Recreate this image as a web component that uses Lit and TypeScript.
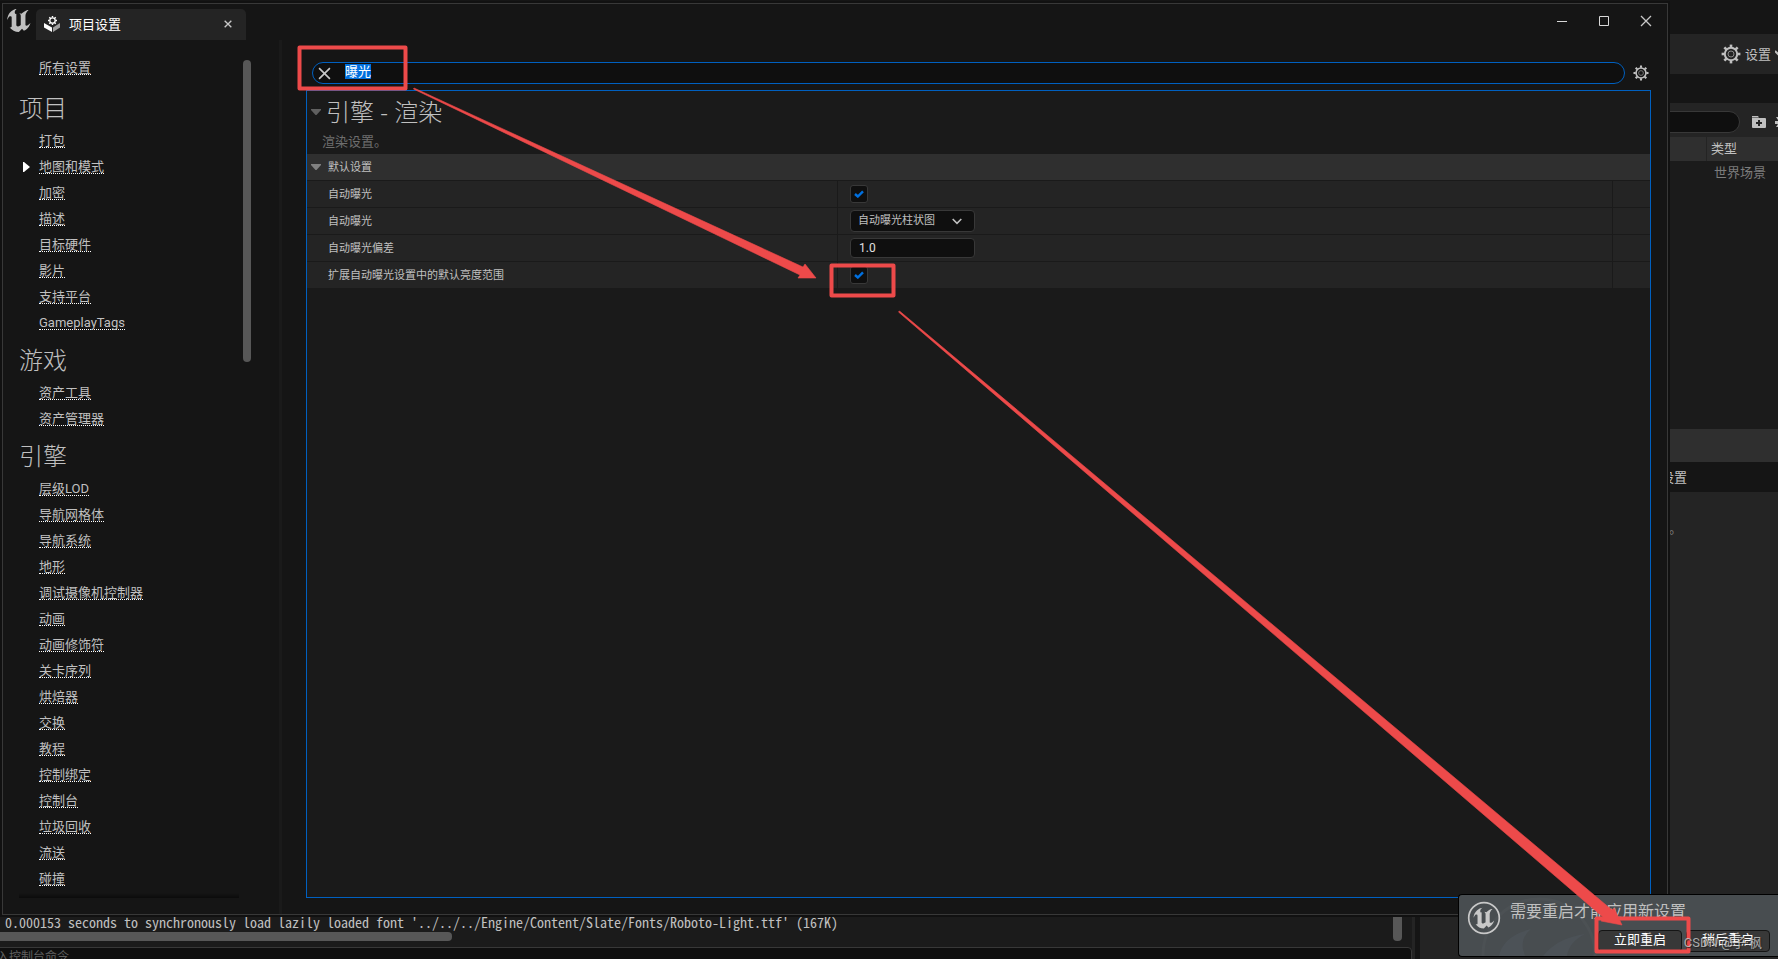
import { LitElement, html, svg, css } from "lit";
import { customElement, query } from "lit/decorators.js";

const UNREAL_U =
  "M19.13 13.729c-.206.997-1.126 3.557-4.06 4.942l-1.179-1.325-1.988 2a7.338 7.338 0 01-5.804-2.978 2.859 2.859 0 00.65.123c.326.006.678-.114.678-.66v-5.394a.89.89 0 00-1.116-.89c-.92.212-1.656 2.509-1.656 2.509a7.304 7.304 0 012.528-5.597 7.408 7.408 0 013.73-1.721c-1.006.573-1.57 1.507-1.57 2.29 0 1.262.76 1.109.984.923v7.28a1.157 1.157 0 00.148.256 1.075 1.075 0 00.88.445c.76 0 1.747-.868 1.747-.868V9.172c0-.6-.452-1.324-.905-1.572 0 0 .838.149 1.484.346a5.537 5.537 0 01.387-.425c1.508-1.48 2.929-1.902 4.112-2.112 0 0-2.151 1.69-2.151 3.96 0 1.687.043 5.801.043 5.801.799.771 1.986-.342 3.059-1.441z";

const base = css`
  * {
    box-sizing: border-box;
  }
  button,
  input,
  select {
    font: inherit;
    color: inherit;
    margin: 0;
    padding: 0;
    border: 0;
    background: none;
    outline: none;
    border-radius: 0;
  }
  button {
    display: flex;
    align-items: center;
    justify-content: center;
  }
  svg {
    display: block;
    flex: none;
  }
`;

const gear = (size: number) => html`
  <svg width=${size} height=${size} viewBox="0 0 20 20" fill="none" stroke="#c0c0c0">
    <circle cx="10" cy="10" r="6.2" stroke-width="2"></circle>
    <circle cx="10" cy="10" r="3" stroke-width="1" stroke="#8a8a8a"></circle>
    ${[0, 45, 90, 135, 180, 225, 270, 315].map(
      (a) => svg`<path d="M10 3.4V.6" stroke-width="2.6" transform="rotate(${a} 10 10)"></path>`
    )}
  </svg>
`;

const cross = (size: number, width: number) => html`
  <svg width=${size} height=${size} viewBox="0 0 12 12" fill="none" stroke="#c8c8c8" stroke-width=${width}>
    <path d="M1 1L11 11M11 1L1 11"></path>
  </svg>
`;

interface Section {
  title: string;
  items: string[];
}

const SECTIONS: Section[] = [
  {
    title: "项目",
    items: ["打包", "地图和模式", "加密", "描述", "目标硬件", "影片", "支持平台", "GameplayTags"],
  },
  { title: "游戏", items: ["资产工具", "资产管理器"] },
  {
    title: "引擎",
    items: [
      "层级LOD", "导航网格体", "导航系统", "地形", "调试摄像机控制器", "动画", "动画修饰符", "关卡序列",
      "烘焙器", "交换", "教程", "控制绑定", "控制台", "垃圾回收", "流送", "碰撞",
    ],
  },
];

@customElement("editor-backdrop")
class EditorBackdrop extends LitElement {
  static styles = [
    base,
    css`
      :host {
        display: flex;
        gap: 5px;
        height: 100%;
        background: #151515;
      }
      .left {
        flex: 1;
        min-width: 0;
        display: flex;
        flex-direction: column;
        justify-content: flex-end;
      }
      .log {
        background: #1b1b1b;
        border-right: 3px solid #242424;
        margin-bottom: -12px;
        display: flex;
        flex-direction: column;
      }
      .lines {
        display: flex;
        justify-content: space-between;
        height: 40px;
        padding: 0 10px 0 5px;
        color: #c0c0c0;
        font-family: "Noto Sans Mono CJK SC", "DejaVu Sans Mono", monospace;
        font-size: 14px;
        line-height: 18px;
        white-space: pre;
      }
      .text {
        padding-top: 12px;
      }
      .vbar {
        width: 9px;
        height: 40px;
        border-radius: 4px;
        background: #575757;
      }
      .hbar {
        width: 32%;
        height: 9px;
        margin: -9px 0 6px;
        border-radius: 0 4px 4px 0;
        background: #575757;
      }
      .console {
        height: 24px;
        margin-left: -20px;
        padding: 0 4px 4px;
        border: 1px solid #383838;
        border-radius: 4px;
        background: #0f0f0f;
        font-size: 12px;
      }
      .console::placeholder {
        color: #606060;
        opacity: 1;
      }
      .right {
        width: 358px;
        display: flex;
        flex-direction: column;
        background: #242424;
        font-size: 13px;
        color: #c0c0c0;
      }
      .strip {
        flex: none;
        background: #151515;
      }
      .top {
        height: 34px;
      }
      .gap {
        height: 29px;
      }
      .bar {
        flex: none;
        display: flex;
        justify-content: flex-end;
        align-items: center;
        gap: 4px;
        height: 40px;
      }
      .bar span {
        padding-bottom: 2px;
      }
      .find {
        height: 34px;
        gap: 9px;
        padding-top: 3px;
      }
      .find input {
        flex: 1;
        height: 22px;
        margin-right: 3px;
        border: 1px solid #383838;
        border-radius: 11px;
        background: #0f0f0f;
      }
      .cols {
        flex: none;
        display: flex;
        gap: 1px;
        height: 24px;
        line-height: 23px;
      }
      .cols span {
        background: #2f2f2f;
      }
      .name {
        flex: 1;
      }
      .kind {
        width: 71px;
        padding-left: 4px;
      }
      .outline {
        flex: none;
        height: 268px;
        padding: 2px 12px;
        background: #1b1b1b;
        color: #7c7c7c;
        text-align: right;
        line-height: 20px;
      }
      .band {
        flex: none;
        height: 33px;
        background: #2f2f2f;
      }
      .title {
        flex: none;
        height: 30px;
        line-height: 32px;
        padding-left: 241px;
        background: #151515;
      }
      .note {
        padding: 26px 0 0 249px;
        color: #7c7c7c;
      }
    `,
  ];

  render() {
    return html`
      <div class="left">
        <div class="log">
          <div class="lines">
            <span class="text">0.000153 seconds to synchronously load lazily loaded font '../../../Engine/Content/Slate/Fonts/Roboto-Light.ttf' (167K)</span>
            <span class="vbar"></span>
          </div>
          <div class="hbar"></div>
          <input class="console" aria-label="控制台命令" placeholder="输入控制台命令" />
        </div>
      </div>
      <div class="right">
        <div class="strip top"></div>
        <div class="bar">
          ${gear(20)}<span>设置</span>
          <svg width="3" height="8" viewBox="0 0 3 8" fill="none" stroke="#c0c0c0" stroke-width="2"><path d="M0 1L5 6"></path></svg>
        </div>
        <div class="strip gap"></div>
        <div class="bar find">
          <input aria-label="搜索" />
          <svg width="14" height="14" viewBox="0 0 14 14" fill="#c0c0c0">
            <path d="M0 1h6l1 1.500H0zM0 3h13q1 0 1 1v8q0 1-1 1H1q-1 0-1-1z"></path>
            <path d="M7 5v6M4 8h6" stroke="#242424" stroke-width="2"></path>
          </svg>
          <svg width="3" height="14" viewBox="0 0 3 14" fill="#c0c0c0"><path d="M0 6h3v3H0zM1 2h2v3zM1 12h2v-3z"></path></svg>
        </div>
        <div class="cols"><span class="name"></span><span class="kind">类型</span></div>
        <div class="outline">世界场景</div>
        <div class="band"></div>
        <div class="title">设置</div>
        <div class="note">。</div>
      </div>
    `;
  }
}

@customElement("settings-nav")
class SettingsNav extends LitElement {
  static styles = [
    base,
    css`
      :host {
        display: flex;
        width: 276px;
        padding: 16px 28px 16px 16px;
        font-size: 13px;
        color: #c0c0c0;
      }
      nav {
        flex: 1;
        display: flex;
        flex-direction: column;
        border-bottom: 1px solid #0c0c0c;
        background: linear-gradient(transparent, #0d0d0d) bottom / 100% 4px no-repeat;
      }
      h2 {
        margin: 0;
        height: 44px;
        padding-top: 6px;
        font-size: 24px;
        line-height: 38px;
        font-weight: 300;
      }
      .item {
        display: grid;
        grid-template-columns: 20px auto;
        justify-content: start;
        align-items: center;
        height: 26px;
      }
      .all {
        height: 28px;
        padding-bottom: 4px;
      }
      a {
        grid-column: 2;
        grid-row: 1;
        color: inherit;
        line-height: 13px;
        text-decoration: none;
        border-bottom: 1px dotted #ffffff;
      }
      .item svg {
        grid-row: 1;
        margin-left: 4px;
      }
      .track {
        width: 8px;
        margin: 4px 0 0 4px;
      }
      .thumb {
        height: 36%;
        border-radius: 4px;
        background: #575757;
      }
    `,
  ];

  render() {
    return html`
      <nav>
        <div class="item all"><a href="#all">所有设置</a></div>
        ${SECTIONS.map(
          (s) => html`
            <h2>${s.title}</h2>
            ${s.items.map(
              (name) => html`
                <div class="item">
                  ${name === "地图和模式"
                    ? html`<svg width="7" height="10" viewBox="0 0 7 10" fill="#ffffff"><path d="M0 0h1l6 5-6 5H0z"></path></svg>`
                    : null}
                  <a href="#${name}">${name}</a>
                </div>
              `
            )}
          `
        )}
      </nav>
      <div class="track"><div class="thumb"></div></div>
    `;
  }
}

@customElement("settings-details")
class SettingsDetails extends LitElement {
  static styles = [
    base,
    css`
      :host {
        flex: 1;
        min-width: 0;
        display: flex;
        flex-direction: column;
        gap: 6px;
        padding: 22px 16px 16px 24px;
        color: #c0c0c0;
      }
      .search {
        display: flex;
        align-items: center;
        gap: 8px;
        padding: 0 2px 0 6px;
      }
      .box {
        flex: 1;
        display: flex;
        align-items: center;
        gap: 14px;
        height: 22px;
        padding: 0 5px;
        border: 1px solid #0060c0;
        border-radius: 11px;
        background: #0f0f0f;
        font-size: 13px;
      }
      .box input {
        flex: 1;
        height: 15px;
        line-height: 15px;
        margin-bottom: 3px;
      }
      .box input::selection {
        background: rgba(0, 112, 224, 0.99);
        color: #ffffff;
      }
      .panel {
        flex: 1;
        border: 1px solid #0060c0;
        background: #1a1a1a;
      }
      .head {
        display: flex;
        align-items: center;
        gap: 5px;
        height: 41px;
        padding-left: 4px;
      }
      h1 {
        margin: 0;
        padding-top: 1px;
        font-family: "Noto Sans", "Noto Sans CJK SC", sans-serif;
        font-size: 24px;
        line-height: 40px;
        font-weight: 300;
      }
      .desc {
        margin: 0;
        height: 22px;
        padding-left: 15px;
        font-size: 13px;
        line-height: 20px;
        color: #6e6e6e;
      }
      .cat {
        display: flex;
        align-items: center;
        gap: 7px;
        height: 27px;
        padding-left: 4px;
        border-bottom: 1px solid #1a1a1a;
        background: #2f2f2f;
        font-size: 11px;
      }
      .cat span {
        padding-bottom: 2px;
      }
      .row {
        display: grid;
        grid-template-columns: 530fr 775fr 38px;
        height: 27px;
        border-bottom: 1px solid #1a1a1a;
        background: #242424;
        font-size: 11px;
      }
      .row > * {
        display: flex;
        align-items: center;
      }
      .label {
        padding: 0 0 3px 21px;
      }
      .value,
      .reset {
        padding-left: 12px;
        border-left: 1px solid #1a1a1a;
      }
      .stack {
        display: grid;
        align-items: center;
      }
      .stack > * {
        grid-area: 1 / 1;
      }
      .stack svg {
        pointer-events: none;
      }
      .check {
        justify-items: center;
      }
      .check input {
        appearance: none;
        width: 18px;
        height: 18px;
        border: 1px solid #383838;
        border-radius: 3px;
        background: #0f0f0f;
      }
      select {
        appearance: none;
      }
      .field {
        width: 125px;
        height: 22px;
        padding: 0 7px 1px;
        border: 1px solid #383838;
        border-radius: 4px;
        background: #0f0f0f;
      }
      .number {
        height: 20px;
        padding-left: 8px;
        font-size: 12px;
        color: #e0e0e0;
      }
      .chevron {
        justify-self: end;
        margin-right: 13px;
      }
    `,
  ];

  @query(".box input") private box!: HTMLInputElement;

  firstUpdated() {
    this.box.focus();
    this.box.select();
  }

  private arrow(color: string) {
    return html`<svg width="10" height="6" viewBox="0 0 10 6" fill=${color}><path d="M0 0h10v1L5.500 6h-1L0 1z"></path></svg>`;
  }

  private check(id: string) {
    return html`
      <span class="stack check">
        <input id=${id} type="checkbox" checked />
        <svg width="10" height="8" viewBox="0 0 10 8" fill="none" stroke="#0070e0" stroke-width="2.400"><path d="M1 4l2.800 2.500L9 1.300"></path></svg>
      </span>
    `;
  }

  private row(id: string, label: string, control: unknown) {
    return html`
      <div class="row">
        <label class="label" for=${id}>${label}</label>
        <div class="value">${control}</div>
        <div class="reset"></div>
      </div>
    `;
  }

  render() {
    return html`
      <div class="search">
        <div class="box">
          <button aria-label="清除">${cross(13, 1.5)}</button>
          <input aria-label="搜索" value="曝光" />
        </div>
        <button aria-label="选项">${gear(16)}</button>
      </div>
      <div class="panel">
        <div class="head">${this.arrow("#606060")}<h1>引擎 - 渲染</h1></div>
        <p class="desc">渲染设置。</p>
        <div class="cat">${this.arrow("#808080")}<span>默认设置</span></div>
        ${this.row("exposure", "自动曝光", this.check("exposure"))}
        ${this.row(
          "method",
          "自动曝光",
          html`<span class="stack">
            <select id="method" class="field"><option>自动曝光柱状图</option></select>
            <svg class="chevron" width="10" height="7" viewBox="0 0 10 7" fill="none" stroke="#c0c0c0" stroke-width="1.600"><path d="M.7 1L5 5.300 9.300 1"></path></svg>
          </span>`
        )}
        ${this.row("bias", "自动曝光偏差", html`<input id="bias" class="field number" value="1.0" />`)}
        ${this.row("range", "扩展自动曝光设置中的默认亮度范围", this.check("range"))}
      </div>
    `;
  }
}

@customElement("restart-toast")
class RestartToast extends LitElement {
  static styles = [
    base,
    css`
      :host {
        display: grid;
        grid-template-columns: 34px 1fr;
        column-gap: 9px;
        width: 320px;
        height: 63px;
        padding: 6px 8px 4px 8px;
        overflow: hidden;
        border: 1px solid #000000;
        border-right: 0;
        border-radius: 4px 0 0 4px;
        background: #484d50;
        color: #c0c0c0;
      }
      .art {
        position: absolute;
        left: 0;
        top: 0;
      }
      .badge,
      .body {
        position: relative;
      }
      .body {
        display: flex;
        flex-direction: column;
        justify-content: space-between;
      }
      .msg {
        font-size: 16px;
        line-height: 22px;
      }
      .actions {
        display: flex;
        justify-content: flex-end;
        gap: 4px;
      }
      .actions button {
        width: 84px;
        height: 22px;
        padding-bottom: 2px;
        border: 1px solid #151515;
        border-radius: 4px;
        background: #383838;
        color: #ffffff;
        font-size: 13px;
        line-height: 18px;
      }
    `,
  ];

  render() {
    return html`
      <svg class="art" width="180" height="61" viewBox="0 0 180 61" fill="none">
        <circle cx="80" cy="60" r="56" stroke="#4c5154" stroke-width="3"></circle>
        <path d="M40 61q4-20 32-27-10 8-8 20l2 7zM84 61q14-18 42-22-16 8-18 22z" fill="#4c5257"></path>
      </svg>
      <svg class="badge" width="34" height="34" viewBox="0 0 24 24">
        <circle cx="12" cy="12" r="10.800" fill="none" stroke="#c8c8c8" stroke-width="1.200"></circle>
        <path fill="#c8c8c8" d=${UNREAL_U}></path>
      </svg>
      <div class="body">
        <span class="msg">需要重启才能应用新设置</span>
        <div class="actions"><button>立即重启</button><button>稍后重启</button></div>
      </div>
    `;
  }
}

@customElement("app-root")
class AppRoot extends LitElement {
  static styles = [
    base,
    css`
      :host {
        display: block;
        position: relative;
        height: 100vh;
        overflow: hidden;
        background: #151515;
        font-family: Roboto, "Noto Sans CJK SC", sans-serif;
      }
      .window {
        position: absolute;
        inset: 3px 110px 44px 2px;
        display: flex;
        flex-direction: column;
        border: 1px solid #383838;
        background: #151515;
        box-shadow: 0 0 0 2px #111111;
      }
      .titlebar {
        display: flex;
        align-items: flex-end;
        height: 36px;
        padding-left: 4px;
      }
      .logo {
        margin-bottom: 7px;
      }
      .tab {
        display: flex;
        align-items: center;
        width: 210px;
        height: 31px;
        margin-left: 5px;
        padding: 0 14px 2px 8px;
        border-radius: 5px 5px 0 0;
        background: #242424;
        color: #ffffff;
        font-size: 13px;
      }
      .tab span {
        flex: 1;
        margin-left: 9px;
      }
      .controls {
        display: flex;
        align-items: center;
        gap: 30px;
        margin-left: auto;
        padding: 0 15px 2px 0;
        height: 36px;
      }
      .content {
        flex: 1;
        min-height: 0;
        display: flex;
      }
      .splitter {
        width: 3px;
        background: #1a1a1a;
      }
      .toast {
        position: absolute;
        right: 0;
        bottom: 2px;
      }
      .mark {
        position: absolute;
        right: 16px;
        bottom: 6px;
        font-size: 13px;
        line-height: 20px;
        color: rgba(205, 205, 205, 0.8);
        text-shadow: 1px 1px 1px #222222;
      }
      .notes {
        position: absolute;
        left: 0;
        top: 0;
        pointer-events: none;
      }
    `,
  ];

  render() {
    return html`
      <editor-backdrop></editor-backdrop>
      <section class="window">
        <header class="titlebar">
          <svg class="logo" width="24" height="24" viewBox="4.500 5 15 15"><path fill="#c0c0c0" d=${UNREAL_U}></path></svg>
          <div class="tab">
            <svg width="16" height="16" viewBox="0 0 16 16">
              <path fill="#ffffff" d="M0 7l8 4.500V16L0 11.500z"></path>
              <path fill="#a0a0a0" d="M16 7l-7 4.500V16l7-4.500z"></path>
              <circle cx="8.500" cy="4.500" r="2.700" fill="none" stroke="#ffffff" stroke-width="1.300"></circle>
              <path stroke="#ffffff" stroke-width="1.400" d="M8.500 0v1.600M8.500 7.400V9M4 4.500h1.600M11.400 4.500H13M5.300 1.300l1 1M10.700 6.700l1 1M11.700 1.300l-1 1M6.300 6.700l-1 1"></path>
            </svg>
            <span>项目设置</span>
            <button aria-label="关闭标签">${cross(8, 2)}</button>
          </div>
          <div class="controls">
            <button aria-label="最小化"><svg width="12" height="12" viewBox="0 0 12 12"><path d="M1 6.500h10" stroke="#d8d8d8"></path></svg></button>
            <button aria-label="最大化"><svg width="12" height="12" viewBox="0 0 12 12"><path d="M1.500 1.500h9v9h-9z" fill="none" stroke="#d8d8d8"></path></svg></button>
            <button aria-label="关闭">${cross(12, 1.3)}</button>
          </div>
        </header>
        <div class="content">
          <settings-nav></settings-nav>
          <div class="splitter"></div>
          <settings-details></settings-details>
        </div>
      </section>
      <restart-toast class="toast"></restart-toast>
      <svg class="notes" width="1778" height="959" viewBox="0 0 1778 959" fill="#ed4a4a">
        <g fill="none" stroke="#ed4a4a" stroke-width="4" stroke-linejoin="round">
          <rect x="299.500" y="47.500" width="106" height="41"></rect>
          <rect x="831.500" y="265.500" width="62" height="30"></rect>
          <rect x="1596.500" y="918.500" width="92" height="33"></rect>
        </g>
        <path d="M414 88L803 267L805 264L816 278L798 278L800 275L413.500 89Z" stroke="#ed4a4a" stroke-width=".6"></path>
        <path d="M899.500 311L1612 910L1614 908L1622 925L1601 921L1604 918L898.500 312Z" stroke="#ed4a4a" stroke-width=".6"></path>
      </svg>
      <div class="mark">CSDN @子·枫</div>
    `;
  }
}
